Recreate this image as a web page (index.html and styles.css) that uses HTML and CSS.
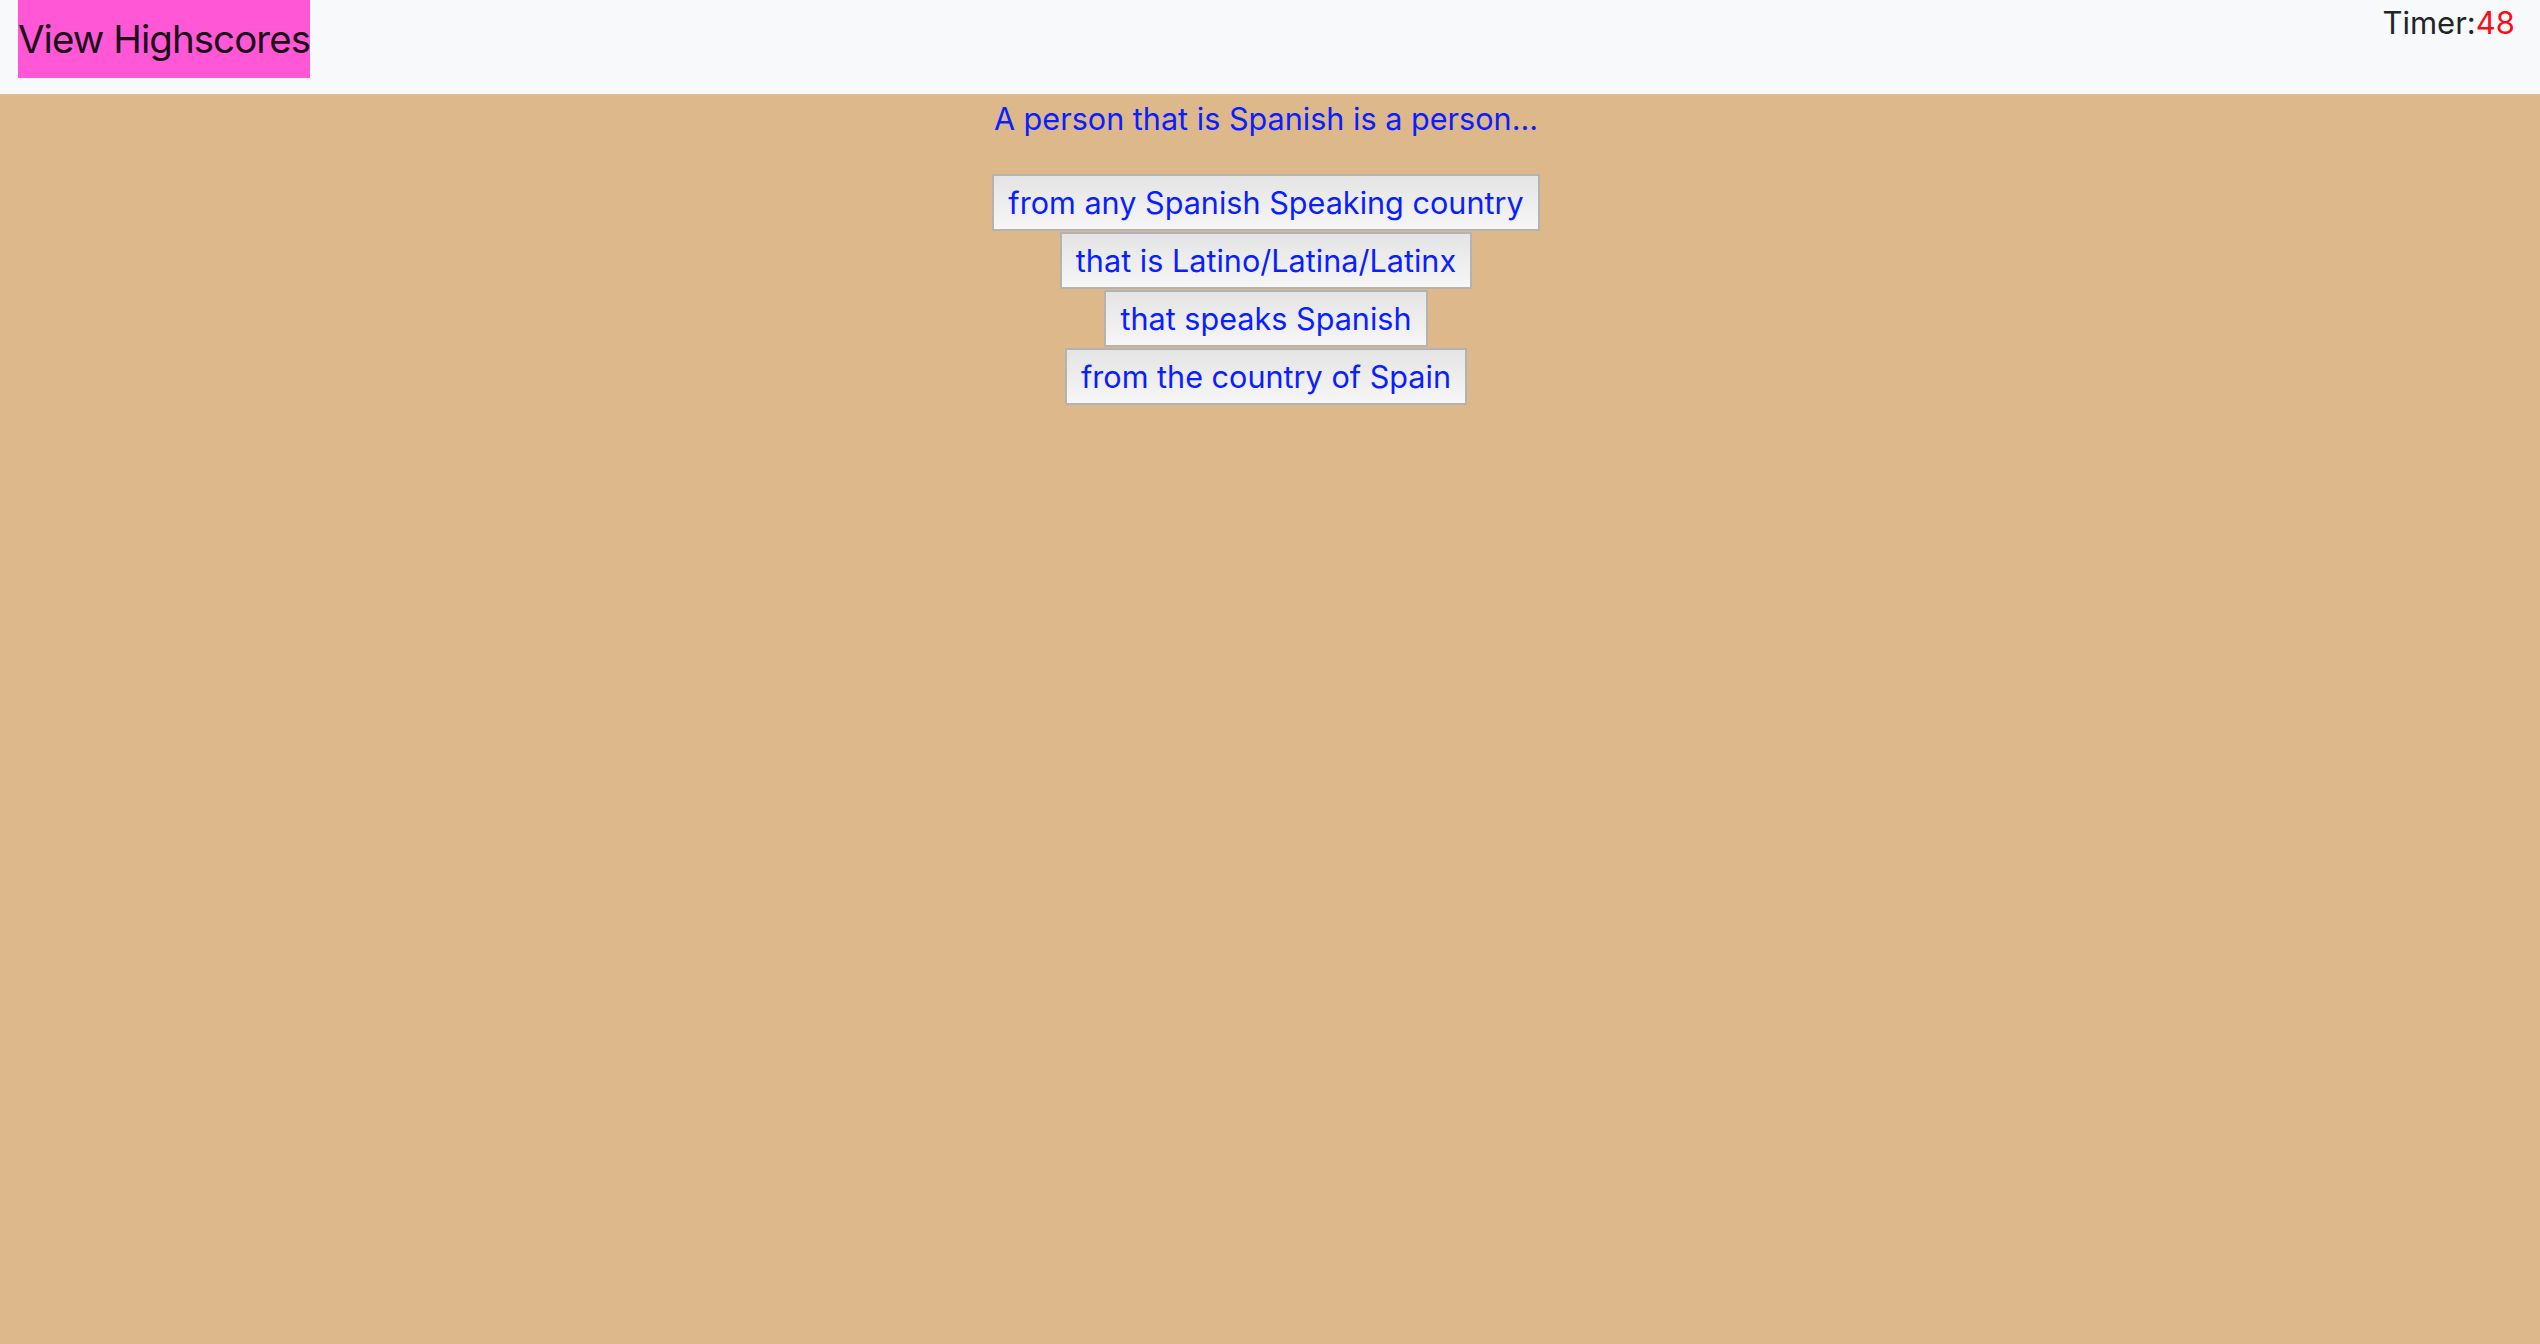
FILE: index.html
```html
<!DOCTYPE html>
<html>
<head>
<meta charset="utf-8">
<link rel="stylesheet" href="styles.css">
</head>
<body>
<header class="topbar">
  <button class="highscores">View Highscores</button>
  <div class="timer">Timer:<span class="timer-value">48</span></div>
</header>
<main class="quiz">
  <p class="question">A person that is Spanish is a person...</p>
  <div class="answers">
    <button class="answer">from any Spanish Speaking country</button>
    <button class="answer">that is Latino/Latina/Latinx</button>
    <button class="answer">that speaks Spanish</button>
    <button class="answer">from the country of Spain</button>
  </div>
</main>
</body>
</html>
```
FILE: styles.css
```css
html, body {
  margin: 0;
  padding: 0;
}
body {
  background: #ddb88a;
  font-family: Inter, "Liberation Sans", Arial, sans-serif;
  min-height: 1344px;
}
.topbar {
  background: #f8f9fa;
  height: 94px;
  display: flex;
  justify-content: space-between;
  align-items: flex-start;
  padding: 0 25px 0 18px;
  box-sizing: border-box;
}
.highscores {
  background: #ff57d6;
  border: none;
  margin: 0;
  padding: 0;
  width: 292px;
  height: 78px;
  font-family: inherit;
  font-size: 38.5px;
  letter-spacing: -0.95px;
  line-height: 78px;
  color: #1a1018;
  text-align: left;
  white-space: nowrap;
  cursor: pointer;
}
.timer {
  font-size: 31px;
  color: #212529;
  padding-top: 4px;
  line-height: 38px;
}
.timer-value {
  color: #ff0a14;
}
.quiz {
  display: flex;
  flex-direction: column;
  align-items: center;
  padding-right: 8px;
}
.question {
  margin: 5px 0 0 0;
  font-size: 30.6px;
  line-height: 40px;
  color: #0a1eff;
}
.answers {
  display: flex;
  flex-direction: column;
  align-items: center;
  gap: 1px;
  margin-top: 35px;
}
.answer {
  margin: 0;
  height: 57px;
  padding: 0 14px;
  border: 2px solid #b3b3b3;
  background: linear-gradient(#e4e4e4, #f6f6f6);
  font-family: inherit;
  font-size: 30.6px;
  color: #0a1eff;
  cursor: pointer;
}
```
